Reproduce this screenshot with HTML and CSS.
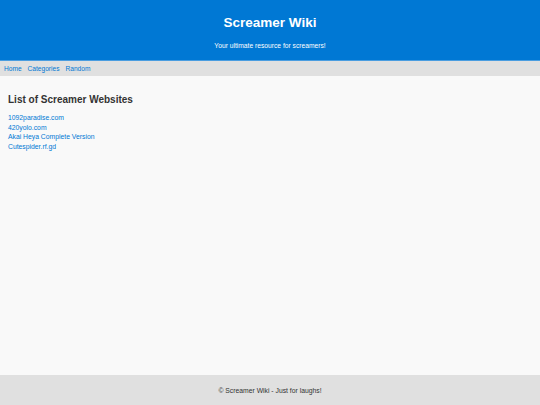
FILE: index.html
```html
<!DOCTYPE html>
<html lang="en">
<head>
<meta charset="utf-8">
<title>Screamer Wiki</title>
<link rel="stylesheet" href="styles.css">
</head>
<body>
<div class="page">
  <header class="site-header">
    <h1 class="site-title">Screamer Wiki</h1>
    <p class="site-tagline">Your ultimate resource for screamers!</p>
  </header>
  <nav class="site-nav">
    <a href="#">Home</a>
    <a href="#">Categories</a>
    <a href="#">Random</a>
  </nav>
  <main class="content">
    <h2 class="section-title">List of Screamer Websites</h2>
    <ul class="site-list">
      <li><a href="#">1092paradise.com</a></li>
      <li><a href="#">420yolo.com</a></li>
      <li><a href="#">Akai Heya Complete Version</a></li>
      <li><a href="#">Cutespider.rf.gd</a></li>
    </ul>
  </main>
  <footer class="site-footer">© Screamer Wiki - Just for laughs!</footer>
</div>
</body>
</html>
```

FILE: styles.css
```css
* { box-sizing: border-box; }
html, body { margin: 0; padding: 0; height: 100%; }
body {
  font-family: "Liberation Sans", Arial, Helvetica, sans-serif;
  background: #f9f9f9;
  color: #333;
}
.page {
  display: flex;
  flex-direction: column;
  min-height: 405px;
}
.site-header {
  background: #0078d4;
  color: #fff;
  text-align: center;
  height: 61px;
  padding-top: 15px;
  border-bottom: 1px solid #4a9de0;
}
.site-title {
  margin: 0;
  font-size: 13.5px;
  font-weight: bold;
  line-height: 16px;
}
.site-tagline {
  margin: 11px 0 0;
  font-size: 6.7px;
  line-height: 8px;
}
.site-nav {
  background: #e0e0e0;
  height: 15px;
  padding: 0 4px;
  display: flex;
  align-items: center;
  gap: 6px;
  font-size: 6.6px;
}
.site-nav a, .site-list a {
  color: #0078d4;
  text-decoration: none;
}
.content {
  flex: 1;
  padding: 18px 8px 0;
}
.section-title {
  margin: 0 0 7px;
  font-size: 10px;
  line-height: 12px;
  font-weight: bold;
  color: #333;
}
.site-list {
  list-style: none;
  margin: 0;
  padding: 0;
  font-size: 6.8px;
  line-height: 9.7px;
}
.site-footer {
  background: #e0e0e0;
  height: 30px;
  display: flex;
  align-items: center;
  justify-content: center;
  font-size: 6.8px;
  color: #333;
}
```
